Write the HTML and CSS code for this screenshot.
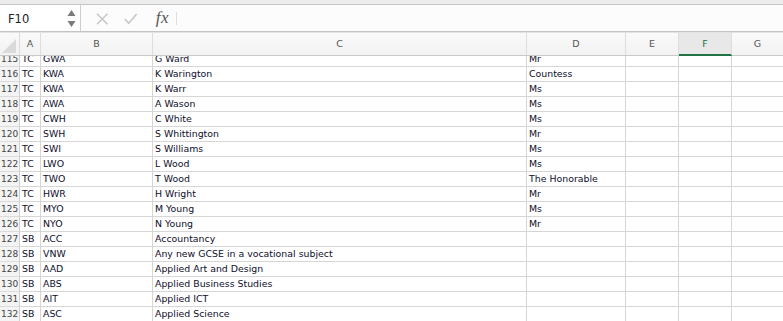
FILE: index.html
```html
<!DOCTYPE html>
<html lang="en">
<head>
    <meta charset="UTF-8">
    <title>Sheet</title>
    <link rel="stylesheet" href="styles.css">
</head>
<body>

<div class="top-strip"></div>

<!-- Name box and formula bar -->
<div class="formula-bar">
    <div class="name-box">
        <span class="cell-ref">F10</span>
        <svg class="spinner" width="9" height="17" viewBox="0 0 9 17">
            <path d="M4.5 0 L8.5 6 L0.5 6 Z" fill="#7a7a7a"/>
            <path d="M0.5 11 L8.5 11 L4.5 17 Z" fill="#7a7a7a"/>
        </svg>
    </div>
    <div class="formula-tools">
        <svg class="tool-icon" width="13" height="12" viewBox="0 0 13 12">
            <path d="M1 0.5 L12 11.5 M12 0.5 L1 11.5" stroke="#c6c6c6" stroke-width="1.6" fill="none"/>
        </svg>
        <svg class="tool-icon" width="14" height="12" viewBox="0 0 14 12">
            <path d="M0.8 6 L5 10.5 L13.2 0.8" stroke="#c6c6c6" stroke-width="1.6" fill="none"/>
        </svg>
        <span class="fx">fx</span>
        <span class="tool-sep"></span>
    </div>
    <div class="formula-input"></div>
</div>

<!-- Sheet -->
<div class="sheet">
    <div class="col-headers">
        <div class="corner"><span class="corner-tri"></span></div>
        <div class="col-head col-a">A</div>
        <div class="col-head col-b">B</div>
        <div class="col-head col-c">C</div>
        <div class="col-head col-d">D</div>
        <div class="col-head col-e">E</div>
        <div class="col-head col-f selected">F</div>
        <div class="col-head col-g">G</div>
    </div>

    <div class="rows">
        <div class="row first"><div class="row-num">115</div><div class="cell col-a">TC</div><div class="cell col-b">GWA</div><div class="cell col-c">G Ward</div><div class="cell col-d">Mr</div><div class="cell col-e"></div><div class="cell col-f"></div><div class="cell col-g"></div></div>
        <div class="row"><div class="row-num">116</div><div class="cell col-a">TC</div><div class="cell col-b">KWA</div><div class="cell col-c">K Warington</div><div class="cell col-d">Countess</div><div class="cell col-e"></div><div class="cell col-f"></div><div class="cell col-g"></div></div>
        <div class="row"><div class="row-num">117</div><div class="cell col-a">TC</div><div class="cell col-b">KWA</div><div class="cell col-c">K Warr</div><div class="cell col-d">Ms</div><div class="cell col-e"></div><div class="cell col-f"></div><div class="cell col-g"></div></div>
        <div class="row"><div class="row-num">118</div><div class="cell col-a">TC</div><div class="cell col-b">AWA</div><div class="cell col-c">A Wason</div><div class="cell col-d">Ms</div><div class="cell col-e"></div><div class="cell col-f"></div><div class="cell col-g"></div></div>
        <div class="row"><div class="row-num">119</div><div class="cell col-a">TC</div><div class="cell col-b">CWH</div><div class="cell col-c">C White</div><div class="cell col-d">Ms</div><div class="cell col-e"></div><div class="cell col-f"></div><div class="cell col-g"></div></div>
        <div class="row"><div class="row-num">120</div><div class="cell col-a">TC</div><div class="cell col-b">SWH</div><div class="cell col-c">S Whittington</div><div class="cell col-d">Mr</div><div class="cell col-e"></div><div class="cell col-f"></div><div class="cell col-g"></div></div>
        <div class="row"><div class="row-num">121</div><div class="cell col-a">TC</div><div class="cell col-b">SWI</div><div class="cell col-c">S Williams</div><div class="cell col-d">Ms</div><div class="cell col-e"></div><div class="cell col-f"></div><div class="cell col-g"></div></div>
        <div class="row"><div class="row-num">122</div><div class="cell col-a">TC</div><div class="cell col-b">LWO</div><div class="cell col-c">L Wood</div><div class="cell col-d">Ms</div><div class="cell col-e"></div><div class="cell col-f"></div><div class="cell col-g"></div></div>
        <div class="row"><div class="row-num">123</div><div class="cell col-a">TC</div><div class="cell col-b">TWO</div><div class="cell col-c">T Wood</div><div class="cell col-d">The Honorable</div><div class="cell col-e"></div><div class="cell col-f"></div><div class="cell col-g"></div></div>
        <div class="row"><div class="row-num">124</div><div class="cell col-a">TC</div><div class="cell col-b">HWR</div><div class="cell col-c">H Wright</div><div class="cell col-d">Mr</div><div class="cell col-e"></div><div class="cell col-f"></div><div class="cell col-g"></div></div>
        <div class="row"><div class="row-num">125</div><div class="cell col-a">TC</div><div class="cell col-b">MYO</div><div class="cell col-c">M Young</div><div class="cell col-d">Ms</div><div class="cell col-e"></div><div class="cell col-f"></div><div class="cell col-g"></div></div>
        <div class="row"><div class="row-num">126</div><div class="cell col-a">TC</div><div class="cell col-b">NYO</div><div class="cell col-c">N Young</div><div class="cell col-d">Mr</div><div class="cell col-e"></div><div class="cell col-f"></div><div class="cell col-g"></div></div>
        <div class="row"><div class="row-num">127</div><div class="cell col-a">SB</div><div class="cell col-b">ACC</div><div class="cell col-c">Accountancy</div><div class="cell col-d"></div><div class="cell col-e"></div><div class="cell col-f"></div><div class="cell col-g"></div></div>
        <div class="row"><div class="row-num">128</div><div class="cell col-a">SB</div><div class="cell col-b">VNW</div><div class="cell col-c">Any new GCSE in a vocational subject</div><div class="cell col-d"></div><div class="cell col-e"></div><div class="cell col-f"></div><div class="cell col-g"></div></div>
        <div class="row"><div class="row-num">129</div><div class="cell col-a">SB</div><div class="cell col-b">AAD</div><div class="cell col-c">Applied Art and Design</div><div class="cell col-d"></div><div class="cell col-e"></div><div class="cell col-f"></div><div class="cell col-g"></div></div>
        <div class="row"><div class="row-num">130</div><div class="cell col-a">SB</div><div class="cell col-b">ABS</div><div class="cell col-c">Applied Business Studies</div><div class="cell col-d"></div><div class="cell col-e"></div><div class="cell col-f"></div><div class="cell col-g"></div></div>
        <div class="row"><div class="row-num">131</div><div class="cell col-a">SB</div><div class="cell col-b">AIT</div><div class="cell col-c">Applied ICT</div><div class="cell col-d"></div><div class="cell col-e"></div><div class="cell col-f"></div><div class="cell col-g"></div></div>
        <div class="row"><div class="row-num">132</div><div class="cell col-a">SB</div><div class="cell col-b">ASC</div><div class="cell col-c">Applied Science</div><div class="cell col-d"></div><div class="cell col-e"></div><div class="cell col-f"></div><div class="cell col-g"></div></div>
    </div>
</div>

</body>
</html>
```

FILE: styles.css
```css
body {
    margin: 0;
    padding: 0;
    width: 783px;
    height: 321px;
    overflow: hidden;
    background-color: #ffffff;
    font-family: 'DejaVu Sans', Verdana, sans-serif;
    color: #111;
}

.top-strip {
    height: 4px;
    background-color: #ececec;
    border-bottom: 1px solid #c6c6c6;
}

/* Formula bar */
.formula-bar {
    display: flex;
    height: 26px;
    background-color: #fcfcfc;
    border-bottom: 1px solid #c4c4c4;
}

.name-box {
    width: 81px;
    display: flex;
    align-items: center;
    justify-content: space-between;
    padding: 0 3px 0 8px;
    box-sizing: border-box;
    border-right: 1px solid #cfcfcf;
    background-color: #ffffff;
}

.cell-ref {
    font-size: 11.5px;
    color: #222;
    margin-top: 2px;
}

.spinner {
    margin-right: 1px;
    margin-top: 1px;
}

.formula-tools {
    width: 96px;
    display: flex;
    align-items: center;
    padding-left: 15px;
    box-sizing: border-box;
}

.tool-icon {
    margin-right: 16px;
    margin-top: 1px;
}

.tool-icon + .tool-icon {
    margin-right: 16px;
}

.fx {
    font-family: 'Liberation Serif', 'Times New Roman', serif;
    font-style: italic;
    font-size: 17px;
    color: #555;
    letter-spacing: 0.5px;
    margin-left: 2px;
}

.tool-sep {
    width: 1px;
    height: 13px;
    background-color: #dedede;
    margin-left: 7px;
}

.formula-input {
    flex: 1;
}

/* Sheet */
.sheet {
    border-top: 1px solid #e2e2e2;
}

.col-headers {
    display: flex;
    height: 22px;
    background: linear-gradient(#fafafa, #f2f2f2);
    border-bottom: 1px solid #c9c9c9;
    position: relative;
    z-index: 1;
}

.corner {
    width: 20px;
    flex: none;
    position: relative;
    border-right: 1px solid #dcdcdc;
    box-sizing: border-box;
}

.corner-tri {
    position: absolute;
    right: 3px;
    bottom: 2px;
    width: 0;
    height: 0;
    border-left: 14px solid transparent;
    border-bottom: 14px solid #dadada;
}

.col-head {
    flex: none;
    box-sizing: border-box;
    border-right: 1px solid #dedede;
    font-size: 9.5px;
    color: #555;
    text-align: center;
    line-height: 22px;
}

.col-head.selected {
    background-color: #e8e8e8;
    color: #217346;
    border-bottom: 2px solid #217346;
    height: 23px;
    line-height: 22px;
}

.col-a { width: 21px; }
.col-b { width: 112px; }
.col-c { width: 374px; }
.col-d { width: 99px; }
.col-e { width: 53px; }
.col-f { width: 53px; }
.col-g { width: 52px; }

.rows {
    overflow: hidden;
}

.row {
    display: flex;
    height: 15px;
}

.row.first {
    margin-top: -4px;
}

.row-num {
    width: 20px;
    flex: none;
    box-sizing: border-box;
    background-color: #f4f4f4;
    border-right: 1px solid #cfcfcf;
    border-bottom: 1px solid #dcdcdc;
    font-size: 9px;
    line-height: 14px;
    color: #444;
    padding-left: 1px;
    overflow: hidden;
}

.cell {
    flex: none;
    box-sizing: border-box;
    border-right: 1px solid #d6d6d6;
    border-bottom: 1px solid #d6d6d6;
    font-size: 9.4px;
    line-height: 14px;
    padding-left: 2px;
    white-space: nowrap;
    overflow: hidden;
    color: #0e0e2a;
}
```
